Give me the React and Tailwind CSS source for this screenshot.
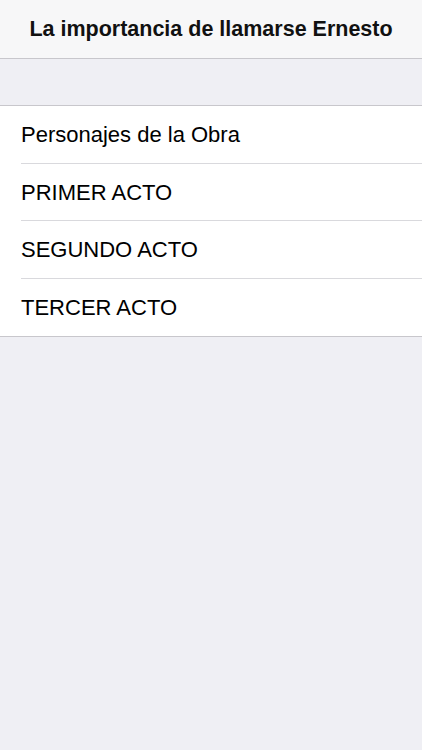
const items = ["Personajes de la Obra", "PRIMER ACTO", "SEGUNDO ACTO", "TERCER ACTO"];

export default function App() {
  return (
    <div
      className="min-h-[750px] bg-[#efeff4] text-black"
      style={{ fontFamily: '"Liberation Sans", Arial, sans-serif' }}
    >
      <header className="h-[59px] bg-[#f7f7f8] border-b border-[#c8c7cc] flex items-center justify-center">
        <h1 className="text-[21.5px] font-bold text-[#111]">La importancia de llamarse Ernesto</h1>
      </header>

      <div className="h-[46px]" />

      <ul className="bg-white border-y border-[#c8c7cc]">
        {items.map((item, i) => (
          <li key={item} className="pl-[21px]">
            <div
              className={
                "h-[57.5px] flex items-center pt-[1px] text-[22px] " +
                (i < items.length - 1 ? "border-b border-[#d9d9dd]" : "")
              }
            >
              {item}
            </div>
          </li>
        ))}
      </ul>
    </div>
  );
}
